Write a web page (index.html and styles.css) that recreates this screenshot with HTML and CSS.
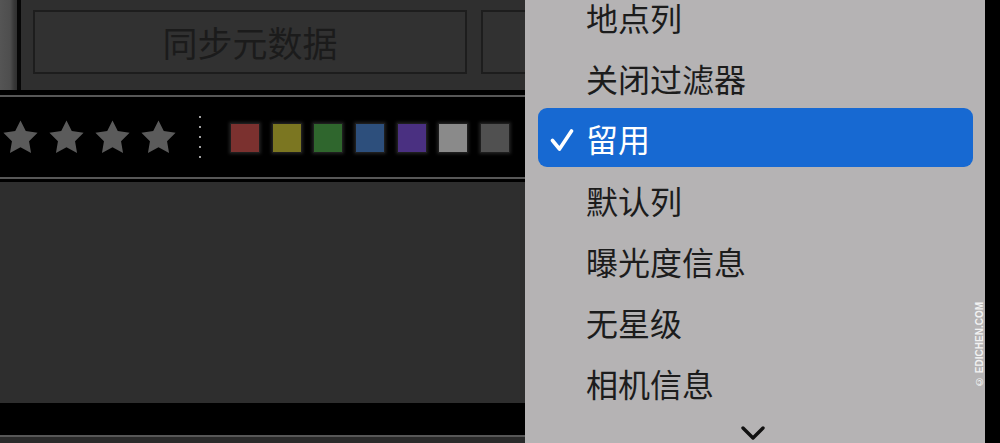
FILE: index.html
```html
<!DOCTYPE html>
<html>
<head>
    <meta charset="UTF-8">
    <title>Library Filter Menu</title>
    <link rel="stylesheet" href="styles.css">
</head>
<body>
    <div class="screen">
        <div class="library">
            <div class="sync-bar">
                <div class="edge"></div>
                <div class="sync-buttons">
                    <div class="sync-btn">同步元数据</div>
                    <div class="sync-btn sync-btn-next"></div>
                </div>
            </div>
            <div class="filter-bar">
                <div class="filter-row">
                    <div class="stars">
                        <svg class="star" viewBox="0 0 24 24"><polygon points="12,2 15.09,8.26 22,9.27 17,14.14 18.18,21.02 12,17.77 5.82,21.02 7,14.14 2,9.27 8.91,8.26"/></svg>
                        <svg class="star" viewBox="0 0 24 24"><polygon points="12,2 15.09,8.26 22,9.27 17,14.14 18.18,21.02 12,17.77 5.82,21.02 7,14.14 2,9.27 8.91,8.26"/></svg>
                        <svg class="star" viewBox="0 0 24 24"><polygon points="12,2 15.09,8.26 22,9.27 17,14.14 18.18,21.02 12,17.77 5.82,21.02 7,14.14 2,9.27 8.91,8.26"/></svg>
                        <svg class="star" viewBox="0 0 24 24"><polygon points="12,2 15.09,8.26 22,9.27 17,14.14 18.18,21.02 12,17.77 5.82,21.02 7,14.14 2,9.27 8.91,8.26"/></svg>
                    </div>
                    <div class="dots"></div>
                    <div class="labels">
                        <span class="swatch red"></span>
                        <span class="swatch yellow"></span>
                        <span class="swatch green"></span>
                        <span class="swatch blue"></span>
                        <span class="swatch purple"></span>
                        <span class="swatch light"></span>
                        <span class="swatch dark"></span>
                    </div>
                </div>
            </div>
            <div class="grid-area"></div>
            <div class="filmstrip">
                <div class="filmstrip-top"></div>
                <div class="filmstrip-bottom"></div>
            </div>
        </div>

        <div class="menu">
            <ul class="menu-list">
                <li class="menu-item">地点列</li>
                <li class="menu-item">关闭过滤器</li>
                <li class="menu-item selected">
                    <svg class="check" viewBox="0 0 24 24"><path d="M2.5 12.5 L9.5 21 L21.5 3"/></svg>
                    留用
                </li>
                <li class="menu-item">默认列</li>
                <li class="menu-item">曝光度信息</li>
                <li class="menu-item">无星级</li>
                <li class="menu-item">相机信息</li>
            </ul>
            <div class="more">
                <svg class="chevron" viewBox="0 0 24 14"><path d="M2 2 L12 12 L22 2"/></svg>
            </div>
            <div class="watermark">© EDICHEN.COM</div>
        </div>

        <div class="frame-edge"></div>
    </div>
</body>
</html>
```

FILE: styles.css
```css
body {
    margin: 0;
    background: #000;
    font-family: "Noto Sans CJK SC", "Noto Sans", sans-serif;
    overflow: hidden;
}

.screen {
    display: flex;
    height: 443px;
}

/* Left side: library panels */
.library {
    width: 525px;
    flex-shrink: 0;
    display: flex;
    flex-direction: column;
    overflow: hidden;
}

.sync-bar {
    height: 90px;
    display: flex;
    background: #2f2f2f;
}

.edge {
    width: 17px;
    flex-shrink: 0;
    background: linear-gradient(to right, #555 0, #4e4e4e 10px, #383838 14px, #303030 17px);
    border-right: 4px solid #060606;
}

.sync-buttons {
    display: flex;
    gap: 14px;
    padding: 10px 0 0 12px;
}

.sync-btn {
    width: 430px;
    height: 60px;
    flex-shrink: 0;
    border: 2px solid #1d1d1d;
    background: #313131;
    color: #1b1b1b;
    font-size: 35px;
    line-height: 60px;
    text-align: center;
}

.sync-btn-next {
    width: 200px;
}

.filter-bar {
    background: #000;
    padding: 5px 0 3px;
}

.filter-row {
    height: 80px;
    border-top: 2px solid #575757;
    border-bottom: 2px solid #575757;
    display: flex;
    align-items: center;
}

.stars {
    display: flex;
    gap: 5px;
}

.star {
    width: 41px;
    height: 41px;
    fill: #5b5b5b;
    margin-top: 1px;
}

.dots {
    width: 2px;
    height: 42px;
    margin-left: 20px;
    background: repeating-linear-gradient(to bottom, #a0a0a0 0 2px, transparent 2px 10px);
}

.labels {
    display: flex;
    gap: 13.7px;
    margin-left: 30px;
    margin-top: 2px;
}

.swatch {
    width: 28px;
    height: 28px;
    box-shadow: 0 0 0 1px #1e1e1e, 0 0 3px 2px rgba(40, 40, 40, 0.8);
}

.red { background: #7b312f; }
.yellow { background: #7b7621; }
.green { background: #2f662d; }
.blue { background: #2d4f7c; }
.purple { background: #4a3081; }
.light { background: #8a8a8a; }
.dark { background: #505050; }

.grid-area {
    height: 221px;
    background: #2e2e2e;
}

.filmstrip {
    flex: 1;
    display: flex;
    flex-direction: column;
}

.filmstrip-top {
    height: 32px;
    background: #000;
}

.filmstrip-bottom {
    flex: 1;
    border-top: 2px solid #575757;
    background: #2a2a2a;
}

/* Right side: popup menu */
.menu {
    position: relative;
    width: 460px;
    flex-shrink: 0;
    background: #b5b3b4;
    overflow: hidden;
}

.menu-list {
    list-style: none;
    margin: -14px 0 0;
    padding: 0;
}

.menu-item {
    height: 61px;
    display: flex;
    align-items: center;
    padding-left: 61px;
    font-size: 32px;
    line-height: 1;
    color: #1c1c1c;
}

.menu-item.selected {
    height: 59px;
    margin: 0 12px 2px 13px;
    padding-left: 12px;
    border-radius: 9px;
    background: #1769d2;
    color: #fff;
}

.check {
    width: 24px;
    height: 24px;
    margin-right: 12px;
    margin-top: 4px;
    fill: none;
    stroke: #fff;
    stroke-width: 3.6;
    stroke-linecap: round;
    stroke-linejoin: round;
}

.more {
    height: 40px;
    display: flex;
    justify-content: center;
    align-items: center;
    padding-right: 4px;
}

.chevron {
    width: 24px;
    height: 14px;
    fill: none;
    stroke: #111;
    stroke-width: 3.4;
    stroke-linecap: round;
    stroke-linejoin: round;
}

.watermark {
    position: absolute;
    right: 0;
    top: 302px;
    width: 10px;
    writing-mode: vertical-rl;
    transform: rotate(180deg);
    font-family: "Liberation Sans", sans-serif;
    font-size: 10px;
    font-weight: bold;
    line-height: 10px;
    color: #f2f2f2;
}

.frame-edge {
    flex: 1;
    background: #000;
}
```
